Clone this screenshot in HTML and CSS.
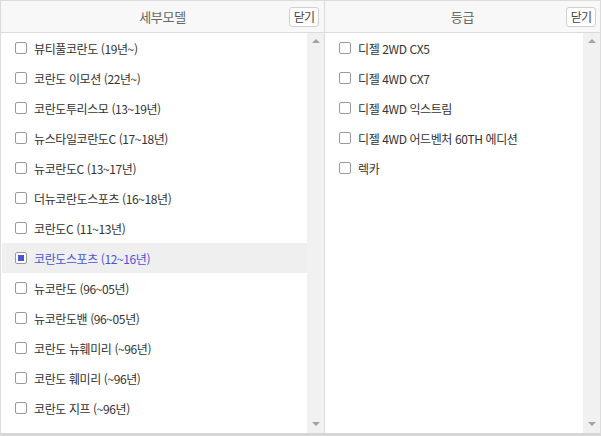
FILE: index.html
```html
<!DOCTYPE html>
<html lang="ko">
<head>
<meta charset="utf-8">
<link rel="stylesheet" href="styles.css">
</head>
<body>
<div class="wrap">
  <section class="panel panel-left">
    <header class="head">
      <span class="title">세부모델</span>
      <button class="close">닫기</button>
    </header>
    <div class="body">
      <ul class="list">
        <li class="item"><span class="cb"></span><span class="label">뷰티풀코란도 (19년~)</span></li>
        <li class="item"><span class="cb"></span><span class="label">코란도 이모션 (22년~)</span></li>
        <li class="item"><span class="cb"></span><span class="label">코란도투리스모 (13~19년)</span></li>
        <li class="item"><span class="cb"></span><span class="label">뉴스타일코란도C (17~18년)</span></li>
        <li class="item"><span class="cb"></span><span class="label">뉴코란도C (13~17년)</span></li>
        <li class="item"><span class="cb"></span><span class="label">더뉴코란도스포츠 (16~18년)</span></li>
        <li class="item"><span class="cb"></span><span class="label">코란도C (11~13년)</span></li>
        <li class="item item-on"><span class="cb cb-on"></span><span class="label">코란도스포츠 (12~16년)</span></li>
        <li class="item"><span class="cb"></span><span class="label">뉴코란도 (96~05년)</span></li>
        <li class="item"><span class="cb"></span><span class="label">뉴코란도밴 (96~05년)</span></li>
        <li class="item"><span class="cb"></span><span class="label">코란도 뉴훼미리 (~96년)</span></li>
        <li class="item"><span class="cb"></span><span class="label">코란도 훼미리 (~96년)</span></li>
        <li class="item"><span class="cb"></span><span class="label">코란도 지프 (~96년)</span></li>
      </ul>
      <div class="track"><span class="arrow arrow-up"></span><span class="arrow arrow-down"></span></div>
    </div>
  </section>
  <section class="panel panel-right">
    <header class="head">
      <span class="title">등급</span>
      <button class="close close-right">닫기</button>
    </header>
    <div class="body">
      <ul class="list">
        <li class="item"><span class="cb"></span><span class="label">디젤 2WD CX5</span></li>
        <li class="item"><span class="cb"></span><span class="label">디젤 4WD CX7</span></li>
        <li class="item"><span class="cb"></span><span class="label">디젤 4WD 익스트림</span></li>
        <li class="item"><span class="cb"></span><span class="label">디젤 4WD 어드벤처 60TH 에디션</span></li>
        <li class="item"><span class="cb"></span><span class="label">렉카</span></li>
      </ul>
      <div class="track"><span class="arrow arrow-up"></span><span class="arrow arrow-down"></span></div>
    </div>
  </section>
</div>
</body>
</html>
```

FILE: styles.css
```css
* { box-sizing: border-box; }
html, body { margin: 0; padding: 0; background: #fff; }
body {
  font-family: "Noto Sans CJK KR", "Noto Sans", sans-serif;
  font-size: 12px;
  color: #333;
}
.wrap {
  width: 601px;
  height: 436px;
  display: flex;
  border: 1px solid #dcdcdc;
  border-bottom: 3px solid #d6d6d6;
}
.panel {
  display: flex;
  flex-direction: column;
  min-width: 0;
}
.panel-left {
  width: 324px;
  border-right: 1px solid #dcdcdc;
}
.panel-right {
  flex: 1;
}
.head {
  position: relative;
  height: 32px;
  flex: none;
  background: #f8f8f8;
  border-bottom: 1px solid #dcdcdc;
  display: flex;
  align-items: center;
  justify-content: center;
}
.title {
  font-size: 13px;
  color: #666;
  letter-spacing: -0.3px;
}
.close {
  position: absolute;
  right: 5px;
  top: 6px;
  height: 20px;
  width: 30px;
  padding: 0;
  background: #fff;
  border: 1px solid #d0d0d0;
  border-radius: 3px;
  font-family: inherit;
  font-size: 12px;
  line-height: 18px;
  color: #444;
  letter-spacing: -0.8px;
}
.close-right { right: 4px; }
.body {
  flex: 1;
  display: flex;
  min-height: 0;
}
.list {
  list-style: none;
  margin: 0;
  padding: 0;
  flex: 1;
}
.item {
  height: 30px;
  display: flex;
  align-items: center;
  padding-left: 13px;
  margin-left: 1px;
}
.item-on {
  background: #efefef;
}
.cb {
  width: 12px;
  height: 12px;
  border: 1px solid #9a9a9a;
  border-radius: 2px;
  background: #fff;
  flex: none;
  display: flex;
  align-items: center;
  justify-content: center;
}
.cb-on::after {
  content: "";
  width: 6px;
  height: 6px;
  background: #4b55d4;
}
.label {
  margin-left: 7px;
  letter-spacing: -0.4px;
  white-space: nowrap;
}
.item-on .label { color: #4b55d4; }
.track {
  position: relative;
  width: 17px;
  flex: none;
  background: #f1f1f1;
}
.arrow {
  position: absolute;
  left: 5px;
  width: 0;
  height: 0;
  border-left: 4px solid transparent;
  border-right: 4px solid transparent;
}
.arrow-up {
  top: 6px;
  border-bottom: 4px solid #a3a3a3;
}
.arrow-down {
  bottom: 7px;
  border-top: 4px solid #a3a3a3;
}
```
